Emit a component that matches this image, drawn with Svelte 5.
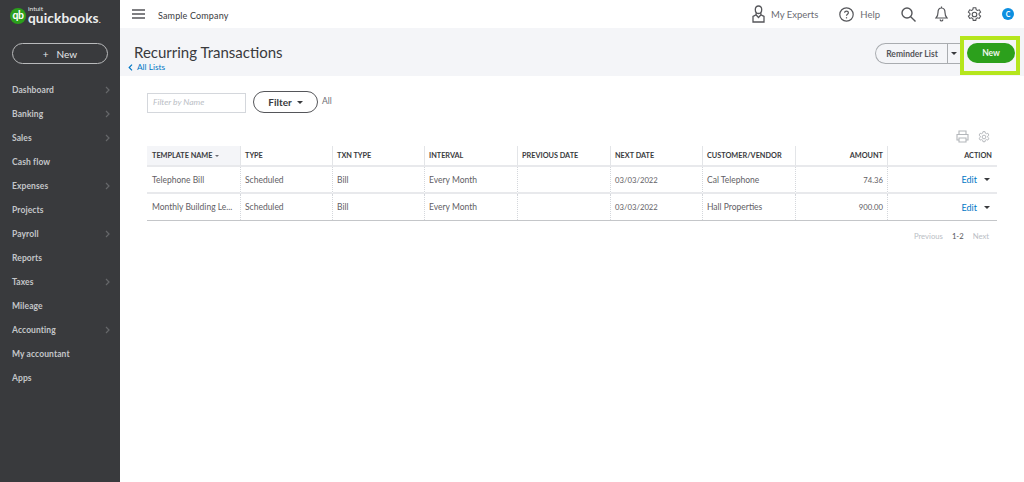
<script>
  const nav = [
    ['Dashboard', true], ['Banking', true], ['Sales', true], ['Cash flow', false],
    ['Expenses', true], ['Projects', false], ['Payroll', true], ['Reports', false],
    ['Taxes', true], ['Mileage', false], ['Accounting', true], ['My accountant', false], ['Apps', false]
  ];
  const cols = ['TEMPLATE NAME', 'TYPE', 'TXN TYPE', 'INTERVAL', 'PREVIOUS DATE', 'NEXT DATE', 'CUSTOMER/VENDOR', 'AMOUNT', 'ACTION'];
  const rows = [
    ['Telephone Bill', 'Scheduled', 'Bill', 'Every Month', '', '03/03/2022', 'Cal Telephone', '74.36'],
    ['Monthly Building Le...', 'Scheduled', 'Bill', 'Every Month', '', '03/03/2022', 'Hall Properties', '900.00']
  ];
</script>

<div class="app">
  <aside class="side">
    <div class="logo">
      <span class="qb">qb</span>
      <div class="brand"><span class="intuit">intuit</span><span class="qbname">quickbooks<small>.</small></span></div>
    </div>
    <button class="newbtn"><span>+</span><span>New</span></button>
    <nav>
      {#each nav as [label, more]}
        <div class="navitem">
          <span>{label}</span>
          {#if more}
            <svg width="5" height="8" viewBox="0 0 5 8"><path d="M1 1l3 3-3 3" fill="none" stroke="#66676a" stroke-width="1.2"/></svg>
          {/if}
        </div>
      {/each}
    </nav>
  </aside>

  <main class="main">
    <header class="top">
      <div class="topleft">
        <svg class="burger" width="13" height="10" viewBox="0 0 13 10"><path d="M0 1h13M0 5h13M0 9h13" stroke="#55565a" stroke-width="1.3"/></svg>
        <span class="company">Sample Company</span>
      </div>
      <div class="topright">
        <span class="toplink experts">
          <svg width="13" height="18" viewBox="0 0 13 18" fill="none" stroke="#55565a" stroke-width="1.3"><path d="M6.5 1C4.4 1 3.3 2.5 3.3 4.5c0 2 1 4 3.2 4s3.2-2 3.2-4C9.700 2.500 8.600 1 6.500 1zM4.200 8l-.2 1.800L1 11.500V17h11v-5.500L9 9.800 8.800 8M4 9.800l2.500 2.700L9 9.800"/></svg>
          My Experts
        </span>
        <span class="toplink help">
          <svg width="15" height="15" viewBox="0 0 15 15" fill="none" stroke="#55565a" stroke-width="1.200"><circle cx="7.500" cy="7.500" r="6.700"/><path d="M5.600 5.800c0-1.100.9-1.700 1.900-1.700s1.900.6 1.900 1.600c0 1.500-1.900 1.500-1.900 3"/><path d="M7.500 10.200v1.200"/></svg>
          Help
        </span>
        <svg class="ic-search" width="15" height="15" viewBox="0 0 15 15" fill="none" stroke="#55565a" stroke-width="1.400"><circle cx="6" cy="6" r="5"/><path d="M9.700 9.700L14.500 14.500"/></svg>
        <svg class="ic-bell" width="13" height="16" viewBox="0 0 13 16" fill="none" stroke="#55565a" stroke-width="1.200"><path d="M6.500 2C4 2 3 4 3 6.500c0 3-.7 4.300-2 5.500h11c-1.300-1.200-2-2.500-2-5.500C10 4 9 2 6.500 2zM6.500 .5V2M5 13.500c.3 1 .8 1.500 1.500 1.500s1.200-.5 1.500-1.500"/></svg>
        <svg class="ic-gear" width="15" height="15" viewBox="0 0 15 15" fill="none" stroke="#55565a" stroke-width="1.100"><path d="M6.200 .8h2.600l.4 1.900 1.200.7 1.900-.6 1.300 2.300-1.500 1.300v1.400l1.500 1.300-1.300 2.300-1.900-.6-1.200.7-.4 1.900H6.200l-.4-1.900-1.200-.7-1.900.6-1.300-2.300 1.500-1.300V6.400L1.400 5.100l1.300-2.300 1.900.6 1.200-.7z"/><circle cx="7.500" cy="7.500" r="2.300"/></svg>
        <span class="avatar">C</span>
      </div>
    </header>

    <section class="pagehead">
      <div class="titles">
        <h1>Recurring Transactions</h1>
        <a class="back"><svg width="5" height="7" viewBox="0 0 5 7"><path d="M4 .7L1.200 3.500 4 6.300" fill="none" stroke="#0077c5" stroke-width="1.200"/></svg>All Lists</a>
      </div>
      <div class="actions">
        <div class="split">
          <span class="splitmain">Reminder List</span>
          <span class="splitcaret"><i class="caret small"></i></span>
        </div>
        <div class="highlight"><button class="green">New</button></div>
      </div>
    </section>

    <section class="content">
      <div class="filters">
        <div class="filterinput">Filter by Name</div>
        <button class="filterbtn">Filter <i class="caret"></i></button>
        <span class="all">All</span>
      </div>

      <div class="tools">
        <svg width="13" height="13" viewBox="0 0 13 13" fill="none" stroke="#b4b7bb" stroke-width="1.100"><path d="M3 4V1h7v3M3 10H1V4.500h11V10h-2M3 8h7v4H3z"/></svg>
        <svg width="12" height="12" viewBox="0 0 15 15" fill="none" stroke="#b4b7bb" stroke-width="1.200"><path d="M6.200 .8h2.600l.4 1.900 1.200.7 1.900-.6 1.300 2.300-1.500 1.300v1.400l1.500 1.300-1.300 2.300-1.900-.6-1.200.7-.4 1.900H6.200l-.4-1.900-1.200-.7-1.900.6-1.300-2.300 1.500-1.300V6.400L1.400 5.100l1.300-2.300 1.900.6 1.200-.7z"/><circle cx="7.500" cy="7.500" r="2.300"/></svg>
      </div>

      <div class="table">
        {#each cols as c, i}
          <div class="th" class:sorted={i === 0} class:right={i >= 7}>
            {c}{#if i === 0}<i class="caret tiny"></i>{/if}
          </div>
        {/each}
        {#each rows as r}
          {#each r as v, i}
            <div class="td" class:right={i === 7} class:num={i === 5 || i === 7}>{v}</div>
          {/each}
          <div class="td right action"><a>Edit</a><i class="caret small"></i></div>
        {/each}
      </div>

      <div class="pager"><span class="off">Previous</span><span class="cur">1-2</span><span class="off">Next</span></div>
    </section>
  </main>
</div>

<style>
  :global(body) { margin: 0; background: #fff; }
  .app {
    display: flex; width: 1024px; height: 482px; overflow: hidden;
    font-family: Lato, "Noto Sans", sans-serif; color: #393a3d;
  }
  button { font-family: inherit; padding: 0; cursor: pointer; }

  .side { width: 120px; flex: none; background: #393a3d; color: #d4d7dc; display: flex; flex-direction: column; }
  .logo { display: flex; align-items: center; gap: 2px; height: 29px; padding: 0 0 0 10px; margin-top: 1px; }
  .qb {
    width: 16px; height: 16px; border-radius: 50%; background: #2ca01c; color: #fff;
    font-size: 10.500px; font-weight: 700; line-height: 15px; text-align: center; letter-spacing: -.5px;
  }
  .brand { display: flex; flex-direction: column; line-height: 1; margin-top: 2px; }
  .intuit { font-size: 6.500px; color: #e8e9eb; line-height: 5px; }
  .qbname { font-size: 13.700px; font-weight: 700; color: #eceded; line-height: 13px; letter-spacing: .1px; }
  .qbname small { font-size: 8px; }
  .newbtn {
    margin: 13px 12px 0; height: 21px; width: 96px; box-sizing: border-box; border-radius: 11px;
    border: 1px solid #b9babc; background: transparent; color: #e6e7e9;
    font-size: 10px; font-weight: 400; display: flex; justify-content: center; align-items: center; gap: 8px;
  }
  nav { margin-top: 14px; display: flex; flex-direction: column; }
  .navitem {
    height: 24px; display: flex; align-items: center; justify-content: space-between;
    padding: 0 10px 0 12px; font-size: 8.500px; font-weight: 700; letter-spacing: .1px; color: #c4c6c9;
  }

  .main { flex: 1; min-width: 0; display: flex; flex-direction: column; }
  .top { height: 28px; display: flex; justify-content: space-between; align-items: center; padding: 0 10px 0 12px; }
  .topleft { display: flex; align-items: center; gap: 13px; }
  .burger { margin-top: -1px; }
  .company { font-size: 9px; font-weight: 400; letter-spacing: .15px; color: #393a3d; margin-top: 2px; }
  .topright { display: flex; align-items: center; color: #6b6c72; }
  .toplink { display: flex; align-items: center; font-size: 9.500px; gap: 6px; color: #6b6c72; }
  .help { margin-left: 21px; }
  .ic-search { margin-left: 21px; }
  .ic-bell { margin-left: 19px; }
  .ic-gear { margin-left: 19px; }
  .avatar {
    margin-left: 20px; width: 12px; height: 12px; border-radius: 50%; background: #0d8fe0; color: #fff;
    font-size: 7px; font-weight: 700; text-align: center; line-height: 12px;
  }

  .pagehead {
    height: 48px; background: #f4f5f8; display: flex; justify-content: space-between; align-items: flex-start;
    padding: 0 4px 0 8px;
  }
  .titles { display: flex; flex-direction: column; }
  h1 { margin: 14px 0 0 6px; font-size: 15px; font-weight: 400; line-height: 20px; color: #393a3d; }
  .back { display: flex; align-items: center; gap: 4px; font-size: 8.300px; color: #0077c5; line-height: 10px; }
  .actions { display: flex; align-items: flex-start; margin-top: 8px; }
  .split {
    display: flex; height: 21px; margin-top: 7px; box-sizing: border-box; border: 1px solid #a9acb0; border-right: 0;
    border-radius: 11px 0 0 11px; font-size: 8.500px; font-weight: 700; color: #55565a; align-items: center;
  }
  .splitmain { width: 70px; text-align: center; padding-left: 1px; }
  .splitcaret { width: 12px; height: 100%; border-left: 1px solid #a9acb0; display: flex; align-items: center; justify-content: center; }
  .highlight {
    box-sizing: border-box; width: 60px; height: 39px; border: 4px solid #b5e61d;
    display: flex; align-items: flex-start; justify-content: flex-end; padding: 3px 1px 0 0;
  }
  .green {
    width: 48px; height: 20px; border: 0; border-radius: 10px; background: #2ca01c; color: #f0f8ee;
    font-size: 8.500px; font-weight: 700;
  }
  .caret {
    display: inline-block; width: 0; height: 0; border-style: solid; border-color: #393a3d transparent transparent;
    border-width: 3.500px 3.500px 0; vertical-align: middle;
  }
  .caret.small { border-width: 3px 3px 0; }
  .caret.tiny { border-width: 2.500px 2.500px 0; border-top-color: #6b6c72; margin-left: 3px; }

  .content { padding: 15px 27px 0; position: relative; }
  .filters { display: flex; align-items: flex-start; }
  .filterinput {
    box-sizing: border-box; width: 99px; height: 20px; border: 1px solid #d4d7dc; margin-top: 2px;
    font-size: 8.500px; font-style: italic; color: #babec5; padding-left: 5px; line-height: 17px;
  }
  .filterbtn {
    margin-left: 7px; width: 65px; height: 22px; border: 1px solid #55565a; border-radius: 11px; background: #fff;
    font-size: 10px; font-weight: 700; color: #393a3d; display: flex; align-items: center; justify-content: center; gap: 5px;
  }
  .all { font-size: 8.500px; color: #6b6c72; margin-left: 4px; line-height: 21px; }
  .tools { display: flex; justify-content: flex-end; align-items: center; gap: 9px; padding-right: 7px; margin-top: 17px; height: 13px; }
  .table {
    margin-top: 3px;
    display: grid; grid-template-columns: 93px 92px 92px 93px 93px 92px 93px 92px 110px; width: 850px;
    border-bottom: 1px solid #c4c6c9;
  }
  .th {
    height: 21px; box-sizing: border-box; padding: 0 4px; font-size: 7.300px; font-weight: 700; color: #393a3d;
    display: flex; align-items: center; white-space: nowrap; border-left: 1px solid #e3e5e8; border-bottom: 2px solid #e8e9ec;
  }
  .th:first-child { border-left: 0; padding-left: 5px; }
  .th.sorted { background: #f4f5f8; }
  .td {
    height: 27px; box-sizing: border-box; padding: 0 4px; font-size: 8.500px; color: #5f6065;
    display: flex; align-items: center; white-space: nowrap; border-left: 1px dotted #d4d7dc; border-bottom: 2px solid #e8e9ec;
  }
  .td:nth-child(9n + 1) { border-left: 0; padding-left: 5px; }
  .td:nth-last-child(-n + 9) { border-bottom: 0; height: 26px; }
  .td.num { font-size: 7.700px; letter-spacing: .02px; }
  .right { justify-content: flex-end; }
  .th:nth-child(9) { padding-right: 5px; }
  .action { padding-right: 7px; gap: 7px; }
  .action a { color: #0077c5; font-size: 9px; }
  .pager { display: flex; justify-content: flex-end; gap: 9px; margin-top: 10px; padding-right: 8px; font-size: 7.700px; line-height: 11px; }
  .off { color: #babec5; }
  .cur { color: #55565a; }
</style>
